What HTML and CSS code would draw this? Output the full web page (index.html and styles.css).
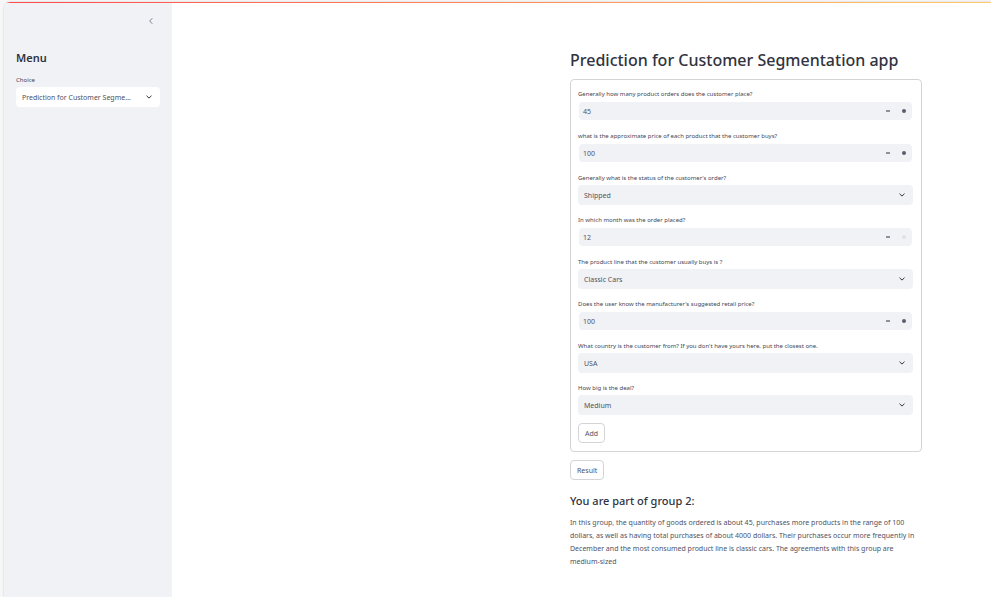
FILE: index.html
```html
<!DOCTYPE html>
<html lang="en">
<head>
<meta charset="utf-8">
<meta name="viewport" content="width=device-width, initial-scale=1">
<title>Prediction for Customer Segmentation app</title>
<link rel="stylesheet" href="styles.css">
</head>
<body>
<div class="app">
  <aside class="sidebar">
    <button class="collapse" type="button" aria-label="Collapse sidebar">
      <svg width="6" height="8" viewBox="0 0 6 8"><path d="M4.3 1.2 1.7 4l2.6 2.8"/></svg>
    </button>
    <h2 class="menu-title">Menu</h2>
    <div class="field">
      <label for="choice">Choice</label>
      <div class="select light"><select id="choice"><option>Prediction for Customer Segmentation app</option></select>
        <svg class="chevron" width="8" height="8" viewBox="0 0 8 8"><path d="M1.5 2.7 4 5.1l2.5-2.4"/></svg></div>
    </div>
  </aside>
  <main class="main">
    <div class="column">
      <h1>Prediction for Customer Segmentation app</h1>
      <form class="form">
        <div class="field">
          <label for="orders">Generally how many product orders does the customer place?</label>
          <div class="number"><input id="orders" type="number" value="45">
            <button type="button" class="minus" aria-label="Decrease"></button><button type="button" class="plus" aria-label="Increase"></button></div>
        </div>
        <div class="field">
          <label for="price">what is the approximate price of each product that the customer buys?</label>
          <div class="number"><input id="price" type="number" value="100">
            <button type="button" class="minus" aria-label="Decrease"></button><button type="button" class="plus" aria-label="Increase"></button></div>
        </div>
        <div class="field">
          <label for="status">Generally what is the status of the customer's order?</label>
          <div class="select"><select id="status"><option>Shipped</option></select>
            <svg class="chevron" width="8" height="8" viewBox="0 0 8 8"><path d="M1.5 2.7 4 5.1l2.5-2.4"/></svg></div>
        </div>
        <div class="field">
          <label for="month">In which month was the order placed?</label>
          <div class="number"><input id="month" type="number" value="12" min="1" max="12">
            <button type="button" class="minus" aria-label="Decrease"></button><button type="button" class="plus" aria-label="Increase" disabled></button></div>
        </div>
        <div class="field">
          <label for="line">The product line that the customer usually buys is ?</label>
          <div class="select"><select id="line"><option>Classic Cars</option></select>
            <svg class="chevron" width="8" height="8" viewBox="0 0 8 8"><path d="M1.5 2.7 4 5.1l2.5-2.4"/></svg></div>
        </div>
        <div class="field">
          <label for="msrp">Does the user know the manufacturer's suggested retail price?</label>
          <div class="number"><input id="msrp" type="number" value="100">
            <button type="button" class="minus" aria-label="Decrease"></button><button type="button" class="plus" aria-label="Increase"></button></div>
        </div>
        <div class="field">
          <label for="country">What country is the customer from? If you don't have yours here, put the closest one.</label>
          <div class="select"><select id="country"><option>USA</option></select>
            <svg class="chevron" width="8" height="8" viewBox="0 0 8 8"><path d="M1.5 2.7 4 5.1l2.5-2.4"/></svg></div>
        </div>
        <div class="field">
          <label for="deal">How big is the deal?</label>
          <div class="select"><select id="deal"><option>Medium</option></select>
            <svg class="chevron" width="8" height="8" viewBox="0 0 8 8"><path d="M1.5 2.7 4 5.1l2.5-2.4"/></svg></div>
        </div>
        <button class="btn" type="button">Add</button>
      </form>
      <button class="btn" type="button">Result</button>
      <section class="result">
        <h2>You are part of group 2:</h2>
        <p>In this group, the quantity of goods ordered is about 45, purchases more products in the range of 100 dollars, as well as having total purchases of about 4000 dollars. Their purchases occur more frequently in December and the most consumed product line is classic cars. The agreements with this group are medium-sized</p>
      </section>
    </div>
  </main>
</div>
</body>
</html>
```
FILE: styles.css
```css
* { box-sizing: border-box; }

body {
  margin: 0;
  background: #f7f7f8;
  color: #31333f;
  font-family: "Noto Sans", "Open Sans", sans-serif;
  font-size: 7px;
}

h1, h2, p { margin: 0; }
h1 { font-weight: 500; }
h2 { font-weight: 600; }
button, input, select { font: inherit; color: inherit; }

.app {
  position: relative;
  display: flex;
  min-height: calc(100vh - 2px);
  margin: 2px 0 0 4px;
  background: #fff;
  border-top-left-radius: 6px;
  box-shadow: 0 0 2px #c4c4c8;
  overflow: hidden;
}

.app::before {
  content: "";
  position: absolute;
  inset: 0 0 auto 3px;
  height: 1px;
  background: linear-gradient(90deg, #ff4b4b, #ffca6a);
}

.sidebar {
  flex: 0 0 168px;
  padding: 12px;
  background: #f0f2f6;
}

.collapse {
  display: flex;
  align-items: center;
  justify-content: center;
  width: 18px;
  height: 14px;
  margin-left: auto;
  padding: 0;
  border: 0;
  background: none;
}

.collapse svg, .chevron {
  fill: none;
  stroke: #31333f;
  stroke-width: 1;
}
.collapse svg { stroke: #808495; }

.menu-title {
  margin: 20px 0 5px;
  font-size: 11px;
  line-height: 20px;
}

.field label {
  display: block;
  height: 14px;
  font-size: 6px;
  line-height: 14px;
  color: #444654;
  white-space: nowrap;
}

.select, .number {
  display: flex;
  align-items: center;
  background: #f0f2f6;
  border-radius: 4px;
  color: #50525f;
}

.select {
  position: relative;
  height: 20px;
}
.light { background: #fff; }

.select select {
  appearance: none;
  width: 100%;
  height: 20px;
  padding: 0 26px 0 6px;
  border: 0;
  background: transparent;
  text-overflow: ellipsis;
}

.chevron {
  position: absolute;
  right: 7px;
  pointer-events: none;
}

.number {
  height: 18px;
  margin: 1px;
}

.number input {
  appearance: textfield;
  flex: 1;
  min-width: 0;
  height: 18px;
  padding: 0 4px;
  border: 0;
  background: transparent;
}
.number input::-webkit-inner-spin-button { appearance: none; }

.number button {
  display: grid;
  place-items: center;
  width: 16px;
  height: 18px;
  padding: 0;
  border: 0;
  background: none;
}

.number button::before {
  content: "";
  width: 4px;
  height: 2px;
  background: #8f919a;
}
.number .plus::before {
  height: 4px;
  background: #5c5e69;
  border-radius: 2px;
}
.number .plus:disabled::before { background: #dfe2e8; }

.main {
  flex: 1;
  display: flex;
  justify-content: flex-end;
  padding: 46px 69px 24px 24px;
}

.column {
  flex: 0 1 352px;
  min-width: 0;
}

h1 {
  margin-bottom: 7px;
  font-size: 16px;
  line-height: 24px;
  white-space: nowrap;
}

.form {
  display: grid;
  gap: 8px;
  margin-bottom: 8px;
  padding: 7px 8px 8px 7px;
  border: 1px solid #d3d4d8;
  border-radius: 4px;
}

.btn {
  justify-self: start;
  height: 20px;
  padding: 0 6px;
  border: 1px solid #d3d4d8;
  border-radius: 4px;
  background: #fff;
  color: #50525f;
}

.result { margin-top: 12px; }

.result h2 {
  margin-bottom: 6px;
  font-size: 11px;
  font-weight: 500;
  line-height: 18px;
}

.result p {
  line-height: 13px;
  color: #50525f;
}
```
